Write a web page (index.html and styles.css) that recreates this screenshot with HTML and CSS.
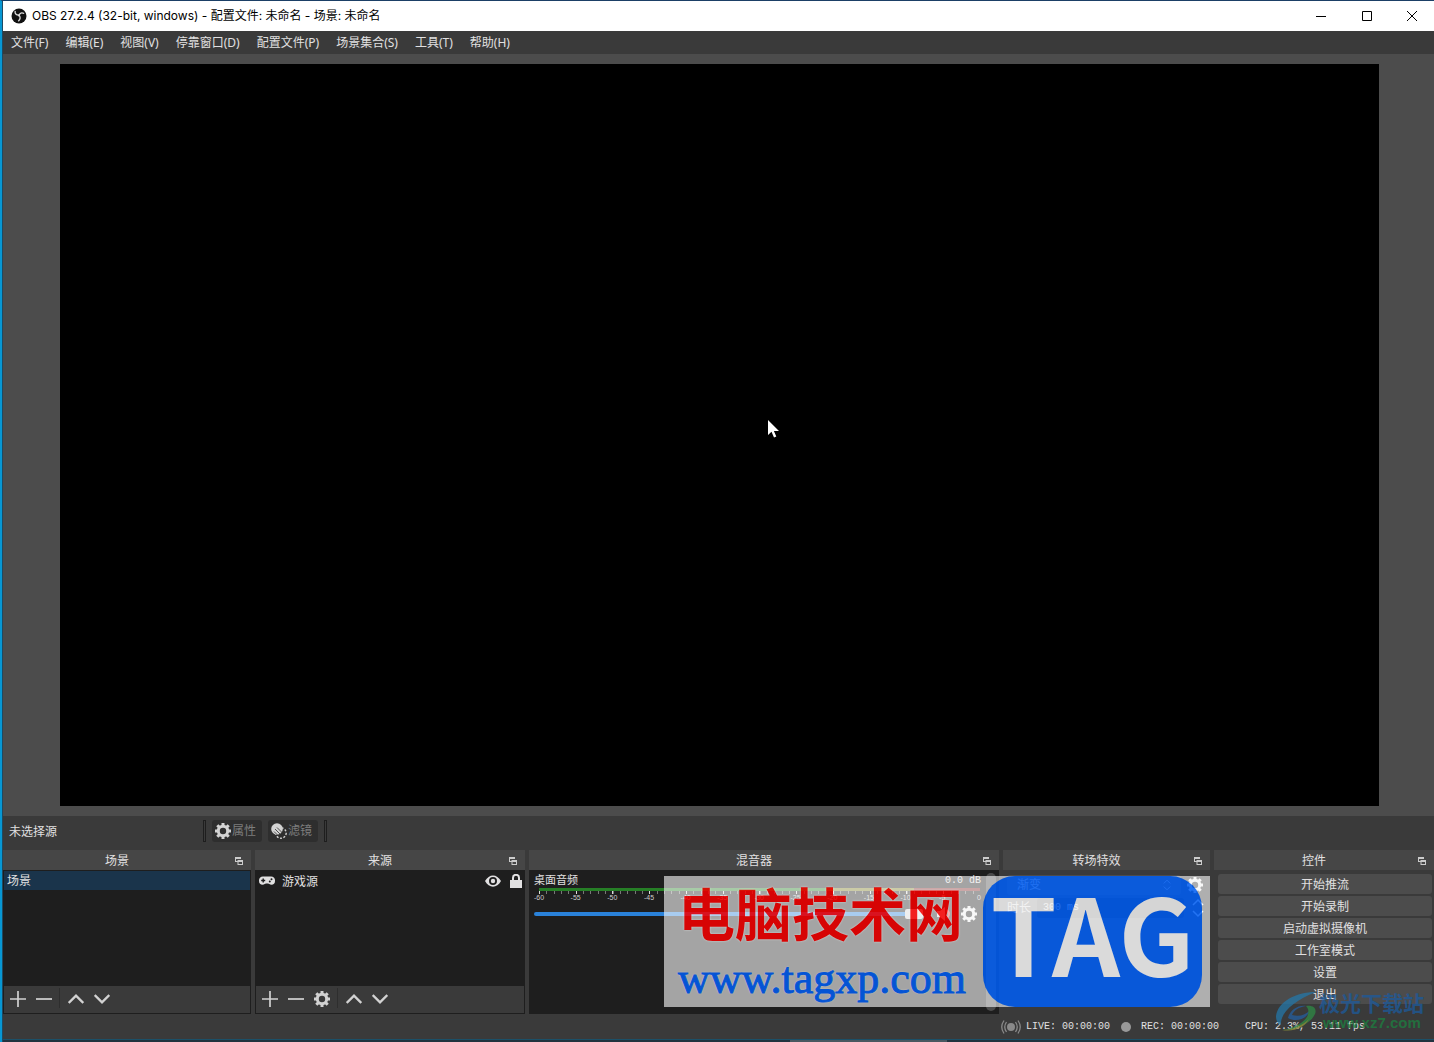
FILE: index.html
```
<!DOCTYPE html>
<html lang="zh-CN">
<head>
<meta charset="utf-8">
<title>OBS 27.2.4</title>
<link rel="stylesheet" href="styles.css">
</head>
<body>
<svg class="defs" aria-hidden="true">
  <symbol id="gear" viewBox="0 0 16 16"><circle cx="8" cy="8" r="4.7" fill="none" stroke="currentColor" stroke-width="3"/><path d="M8 0v3M8 13v3M0 8h3M13 8h3M2.3 2.3l2.1 2.1M11.6 11.6l2.1 2.1M13.7 2.3l-2.1 2.1M4.4 11.6l-2.1 2.1" stroke="currentColor" stroke-width="3"/></symbol>
  <symbol id="plus" viewBox="0 0 16 16"><path d="M8 0v16M0 8h16" stroke="currentColor" stroke-width="1.7"/></symbol>
  <symbol id="minus" viewBox="0 0 16 16"><path d="M0 8h16" stroke="currentColor" stroke-width="1.7"/></symbol>
  <symbol id="up" viewBox="0 0 16 16"><path d="M.7 12L8 4.7l7.300 7.300" fill="none" stroke="currentColor" stroke-width="2.400"/></symbol>
  <symbol id="down" viewBox="0 0 16 16"><path d="M.7 4L8 11.300 15.300 4" fill="none" stroke="currentColor" stroke-width="2.400"/></symbol>
  <symbol id="float" viewBox="0 0 8 8"><path d="M0 0h6v2H1v2h1.500v1H0zM2.500 3H8v5H2.500zM3.500 5v2H7V5z" fill="currentColor" fill-rule="evenodd"/></symbol>
</svg>
<div class="window">
  <header class="titlebar">
    <svg class="logo" viewBox="0 0 16 16"><circle cx="8" cy="8" r="7.500" fill="#111"/><g fill="none" stroke="#ddd" stroke-width="1.300"><path d="M4.200 2.800c-.6 2.700.8 4.400 3.800 4.400"/><path d="M8 7.200c.8-2.200 2.600-3 5.200-1.700" /><path d="M8 7.200c1.700 2 1.300 4.200-.7 6"/></g><circle cx="8" cy="7.500" r="1.100" fill="#ddd"/></svg>
    <h1 class="title">OBS 27.2.4 (32-bit, windows) - 配置文件: 未命名 - 场景: 未命名</h1>
    <div class="winbtns">
      <button aria-label="最小化"><svg viewBox="0 0 10 10"><path d="M0 5.500h10" stroke="#000"/></svg></button>
      <button aria-label="最大化"><svg viewBox="0 0 10 10"><path d="M.5.5h9v9h-9z" fill="none" stroke="#000"/></svg></button>
      <button aria-label="关闭"><svg viewBox="0 0 10 10"><path d="M0 0l10 10M10 0L0 10" stroke="#000"/></svg></button>
    </div>
  </header>
  <nav class="menubar">
    <button>文件(F)</button><button>编辑(E)</button><button>视图(V)</button><button>停靠窗口(D)</button><button>配置文件(P)</button><button>场景集合(S)</button><button>工具(T)</button><button>帮助(H)</button>
  </nav>
  <main class="preview"><div class="canvas">
    <svg class="cursor" viewBox="0 0 12 18"><path d="M0 0v15l3.500-3.300L6 17.500l2.300-1L5.900 11H11z" fill="#fff"/></svg>
  </div></main>
  <div class="context">
    <span class="nosource">未选择源</span>
    <i class="grip"></i>
    <button><svg viewBox="0 0 16 16"><use href="#gear"/></svg>属性</button>
    <button><svg viewBox="0 0 16 16"><circle cx="10" cy="10" r="5.200" fill="none" stroke="currentColor" stroke-width="1.400" stroke-dasharray="2 1.500"/><circle cx="6" cy="6" r="5.800" fill="currentColor"/><path d="M4 6l6 6M6 4.500l6 6M3 8.500l5 5" stroke="#2e2e2e" stroke-width=".8"/></svg>滤镜</button>
    <i class="grip"></i>
  </div>
  <div class="docks">
    <section class="dock">
      <h2>场景<svg viewBox="0 0 8 8"><use href="#float"/></svg></h2>
      <div class="list"><div class="scene">场景</div></div>
      <div class="tools">
        <button aria-label="添加场景"><svg><use href="#plus"/></svg></button><button aria-label="移除场景"><svg><use href="#minus"/></svg></button><i></i><button aria-label="场景上移"><svg><use href="#up"/></svg></button><button aria-label="场景下移"><svg><use href="#down"/></svg></button>
      </div>
    </section>
    <section class="dock">
      <h2>来源<svg viewBox="0 0 8 8"><use href="#float"/></svg></h2>
      <div class="list"><div class="source">
        <svg class="pad" viewBox="0 0 16 10"><path fill="currentColor" fill-rule="evenodd" d="M4 .5h8a4 4 0 0 1 4 4.500c0 2.500-1.500 3.700-3.500 3.700S10 7.500 9 7.500H7c-1 0-1.500 1.200-3.500 1.200S0 7.500 0 5A4 4 0 0 1 4 .5zM3.500 2.500v1.300H2.200v1.400h1.300v1.300h1.400V5.200h1.300V3.800H4.900V2.500zM12.500 2.200a1 1 0 1 0 0 2 1 1 0 0 0 0-2zM10.800 4.500a1 1 0 1 0 0 2 1 1 0 0 0 0-2z"/></svg>
        <span>游戏源</span>
        <svg class="eye" viewBox="0 0 16 12"><path fill="currentColor" fill-rule="evenodd" d="M0 6C4-1.500 12-1.500 16 6 12 13.500 4 13.500 0 6zM8 2a4 4 0 1 0 0 8 4 4 0 0 0 0-8z"/><circle cx="8" cy="6" r="2.200" fill="currentColor"/></svg>
        <svg class="lock" viewBox="0 0 12 14"><path d="M3 7V3.800a3 3 0 0 1 6 0V7" fill="none" stroke="currentColor" stroke-width="2"/><path d="M0 6h12v8H0z" fill="currentColor"/></svg>
      </div></div>
      <div class="tools">
        <button aria-label="添加来源"><svg><use href="#plus"/></svg></button><button aria-label="移除来源"><svg><use href="#minus"/></svg></button><button aria-label="来源属性"><svg><use href="#gear"/></svg></button><i></i><button aria-label="来源上移"><svg><use href="#up"/></svg></button><button aria-label="来源下移"><svg><use href="#down"/></svg></button>
      </div>
    </section>
    <section class="dock">
      <h2>混音器<svg viewBox="0 0 8 8"><use href="#float"/></svg></h2>
      <div class="mixer">
        <div class="channel">
          <div class="chhead"><label for="vol">桌面音频</label><span class="db">0.0 dB</span></div>
          <div class="meter"></div>
          <div class="ticks"></div>
          <div class="scale"><span>-60</span><span>-55</span><span>-50</span><span>-45</span><span>-40</span><span>-35</span><span>-30</span><span>-25</span><span>-20</span><span>-15</span><span>-10</span><span>-5</span><span>0</span></div>
          <div class="volume">
            <input id="vol" type="range" min="0" max="100" value="100">
            <svg viewBox="0 0 16 16"><path d="M1 5h3l5-4v14l-5-4H1z" fill="#ddd"/><path d="M11 4q4 4 0 8" fill="none" stroke="#e33" stroke-width="2"/></svg>
            <svg viewBox="0 0 16 16"><use href="#gear"/></svg>
          </div>
        </div>
        <div class="scroll"></div>
      </div>
    </section>
    <section class="dock">
      <h2>转场特效<svg viewBox="0 0 8 8"><use href="#float"/></svg></h2>
      <div class="transitions">
        <div class="trow"><div class="combo"><select aria-label="转场"><option>渐变</option></select><svg viewBox="0 0 16 20"><path d="M4 8l4-4 4 4M4 12l4 4 4-4" fill="none" stroke="currentColor"/></svg></div><svg class="tgear" viewBox="0 0 16 16"><use href="#gear"/></svg></div>
        <div class="trow"><label for="dur">时长</label><input id="dur" value="300 ms"><svg class="spin" viewBox="0 0 16 20"><path d="M3 7l5-5 5 5M3 13l5 5 5-5" fill="none" stroke="currentColor" stroke-width="1.500"/></svg></div>
      </div>
      <div class="tagmark">
        <div class="tagtext"><div class="tagname">电脑技术网</div><div class="tagurl">www.tagxp.com</div></div>
        <div class="taglogo">TAG</div>
      </div>
    </section>
    <section class="dock">
      <h2>控件<svg viewBox="0 0 8 8"><use href="#float"/></svg></h2>
      <div class="controls">
        <button>开始推流</button><button>开始录制</button><button>启动虚拟摄像机</button><button>工作室模式</button><button>设置</button><button>退出</button>
      </div>
    </section>
  </div>
  <footer class="status">
    <svg class="live" viewBox="0 0 20 14"><circle cx="10" cy="7" r="4" fill="currentColor"/><path d="M5.500 2q-3.500 5 0 10M14.500 2q3.500 5 0 10M3 .5q-4.500 6.500 0 13M17 .5q4.500 6.500 0 13" fill="none" stroke="currentColor" stroke-width="1.300"/></svg>
    <span class="livetime">LIVE: 00:00:00</span>
    <i class="dot"></i>
    <span class="rectime">REC: 00:00:00</span>
    <span>CPU: 2.3%, 53.11 fps</span>
    <div class="sitemark">
      <svg viewBox="0 0 44 40"><path d="M41 0C20 0 3 10 1 24c0 5 2 8 5 9-1-12 12-24 35-33z" fill="#2477a8"/><path d="M13 26c2-8 10-13 18-12-7 1-12 4-14 9 7 2 14 0 18-5-2 8-13 13-22 8z" fill="#245fa0"/><path d="M31 14c8-1 11 3 9 8-4 9-17 16-33 16 13-2 25-9 26-16 1-3 0-6-2-8z" fill="#2e8a45"/><path d="M7 38c12 0 21-5 27-11-5 9-15 13-27 11z" fill="#93963a"/></svg>
      <div><div class="sitename">极光下载站</div><div class="siteurl">www.xz7.com</div></div>
    </div>
  </footer>
  <div class="taskbar"></div>
</div>
</body>
</html>
```
FILE: styles.css
```
* { box-sizing: border-box; }
body {
  margin: 0;
  background: #3a3a3a;
  color: #e1e0e1;
  font: 12px/20px "Noto Sans", "Noto Sans CJK SC", sans-serif;
}
button, input, select { font: inherit; color: inherit; border: 0; margin: 0; padding: 0; background: none; }
h1, h2 { margin: 0; font: inherit; }
svg { display: block; flex: none; }
.defs { position: absolute; width: 0; height: 0; }
.window {
  position: relative;
  display: flex;
  flex-direction: column;
  min-height: 100vh;
  padding-left: 1px;
  border-top: 1px solid #1b3f66;
  border-left: 2px solid #0797d3;
  background: linear-gradient(#1d4a63, #1d4a63) 0 0 / 1px 100% no-repeat;
  overflow: hidden;
}
.titlebar { display: flex; align-items: center; height: 30px; background: #fff; color: #000; padding-left: 8px; }
.logo { width: 16px; height: 16px; margin-right: 5px; }
.title { flex: 1; font-family: Inter, "Noto Sans CJK SC", sans-serif; }
.winbtns { display: flex; }
.winbtns button { width: 46px; height: 28px; display: grid; place-items: center; }
.winbtns button:last-child { width: 44px; }
.winbtns svg { width: 10px; height: 10px; }
.menubar { display: flex; height: 23px; padding-left: 8px; gap: 17px; }
.menubar button { white-space: nowrap; }
.preview { flex: 1; display: flex; background: #4c4c4c; padding: 10px 55px 10px 57px; }
.canvas { flex: 1; display: grid; place-items: center; background: #000; }
.cursor { width: 12px; height: 18px; margin: 0 0 12px 108px; }

.context { display: flex; align-items: center; height: 34px; padding: 0 0 4px 6px; gap: 6px; }
.nosource { width: 188px; padding-top: 2px; }
.grip { width: 3px; height: 22px; border: 1px solid #1e1e1e; }
.context button {
  display: flex; align-items: center; gap: 1px;
  width: 50px; height: 22px; padding-left: 3px; line-height: 22px;
  background: #2e2e2e; border-radius: 3px; color: #7d7d7d; white-space: nowrap;
}
.context button svg { width: 16px; height: 16px; color: #d2d2d2; }

.docks { display: grid; grid-template-columns: 248fr 270fr 470fr 207fr 220fr; gap: 4px; min-height: 164px; }
.dock { position: relative; display: flex; flex-direction: column; min-width: 0; }
.dock h2 { display: grid; grid-template-columns: 1fr 8px; column-gap: 4px; align-items: center; height: 20px; padding-right: 8px; background: #464646; line-height: 22px; text-align: center; }
.dock h2 svg { width: 8px; height: 8px; color: #ccc; }
.list { flex: 1; background: #1e1e1e; padding: 1px; }
.scene { height: 19px; line-height: 20px; padding-left: 3px; background: #1a344b; }
.source { display: flex; align-items: center; height: 20px; padding-left: 3px; }
.source span { flex: 1; padding: 2px 0 0 7px; }
.pad { width: 16px; height: 10px; }
.eye { width: 16px; height: 12px; margin-right: 9px; }
.lock { width: 12px; height: 14px; margin-right: 2px; }
.tools { display: flex; align-items: flex-start; gap: 4px; height: 28px; padding: 2px 3px; border: 1px solid #1e1e1e; border-top: 0; }
.tools button { width: 22px; height: 22px; display: grid; place-items: center; }
.tools svg { width: 16px; height: 16px; color: #d2d2d2; }
.tools i { width: 2px; height: 20px; border-left: 1px solid #2e2e2e; }

.mixer { flex: 1; display: flex; background: #1e1e1e; padding: 3px 3px 3px 5px; }
.channel { flex: 1; min-width: 0; }
.chhead { display: flex; justify-content: space-between; height: 15px; line-height: 14px; font-size: 11px; padding-right: 5px; }
.db { font: 10px/16px "Liberation Mono", monospace; }
.meter { height: 3px; margin: 0 6px 0 5px; background: linear-gradient(90deg, #267f26 66%, #7f7f26 66% 85%, #7f2626 85%); }
.ticks {
  height: 3px; margin: 0 6px 0 5px;
  background: repeating-linear-gradient(90deg, #ddd 0 1px, transparent 1px calc(100% / 12)), repeating-linear-gradient(90deg, #777 0 1px, transparent 1px calc(100% / 60));
}
.scale { display: flex; justify-content: space-between; margin: 0 7px 0 5px; font: 7px/7px "Liberation Sans", sans-serif; color: #ccc; }
.scale span { width: 0; display: flex; justify-content: center; }
.volume { display: flex; align-items: center; gap: 9px; height: 26px; padding-right: 9px; }
.volume svg { width: 16px; height: 16px; color: #eee; }
.volume input { flex: 1; min-width: 0; height: 10px; appearance: none; margin-right: 4px; }
.volume input::-webkit-slider-runnable-track { height: 4px; border-radius: 2px; background: #2a82da; }
.volume input::-webkit-slider-thumb { appearance: none; width: 18px; height: 10px; margin-top: -3px; border-radius: 2px; background: #d2d2d2; }
.scroll { width: 10px; border-radius: 5px; background: #4c4c4c; }

.transitions { padding: 5px 4px; display: grid; gap: 3px; }
.trow { display: flex; align-items: center; gap: 6px; height: 20px; }
.trow svg { width: 16px; height: 16px; color: #eee; }
.combo { flex: 1; display: flex; align-items: center; height: 20px; padding-right: 6px; background: #4c4c4c; border-radius: 3px; }
.trow select { flex: 1; height: 20px; appearance: none; padding-left: 10px; }
.tgear { margin-right: 3px; }
.trow input { flex: 1; min-width: 0; height: 20px; padding-left: 6px; background: #1e1e1e; border-radius: 3px; font: 10px/20px "Liberation Mono", monospace; }
.trow .spin { height: 20px; }

/* translucent banner that spans the mixer and transition docks */
.tagmark {
  position: absolute; top: 26px; right: 0; z-index: 2;
  display: flex; width: 546px; height: 131px; padding-right: 8px;
  background: rgba(255, 255, 255, .7); opacity: .85; pointer-events: none;
}
.tagtext { flex: 1; padding-left: 14px; }
.tagname { font: bold 57px/70px "Noto Sans CJK SC", sans-serif; color: #f80000; text-shadow: 0 0 2px #fff; white-space: nowrap; }
.tagurl { font: 44px/66px "Liberation Serif", serif; color: #005ef5; -webkit-text-stroke: 1px #005ef5; text-shadow: 0 0 2px #fff; }
.taglogo {
  width: 219px; height: 131px; border-radius: 32px; background: #005ef5; color: #f6f6f6;
  font: bold 106px/110px "Noto Sans CJK SC", sans-serif; text-align: center;
}

.controls { display: grid; gap: 2px; padding: 4px 2px 0 4px; }
.controls button { height: 20px; padding-top: 1px; background: #4c4c4c; border-radius: 3px; }

.status { position: relative; display: flex; align-items: center; justify-content: flex-end; height: 25px; padding-right: 69px; font: 10px/22px "Liberation Mono", monospace; white-space: nowrap; }
.live { width: 20px; height: 14px; color: #8a8a8a; margin-right: 5px; }
.livetime { margin-right: 11px; }
.dot { width: 10px; height: 10px; border-radius: 50%; background: #999; margin-right: 10px; }
.rectime { margin-right: 26px; }
.sitemark { position: absolute; right: 10px; bottom: 5px; display: flex; opacity: .75; pointer-events: none; }
.sitemark svg { width: 44px; height: 40px; }
.sitename { font: bold 21px/20px "Noto Sans CJK SC", sans-serif; color: #1c5a9c; }
.siteurl { padding-left: 4px; font: bold 15px/22px "Liberation Sans", sans-serif; color: #1c8040; }
.taskbar { height: 3px; border-top: 1px solid #1b5068; background: linear-gradient(90deg, #22333f 55%, #4a5860 55% 66%, #22333f 66%); }
```
